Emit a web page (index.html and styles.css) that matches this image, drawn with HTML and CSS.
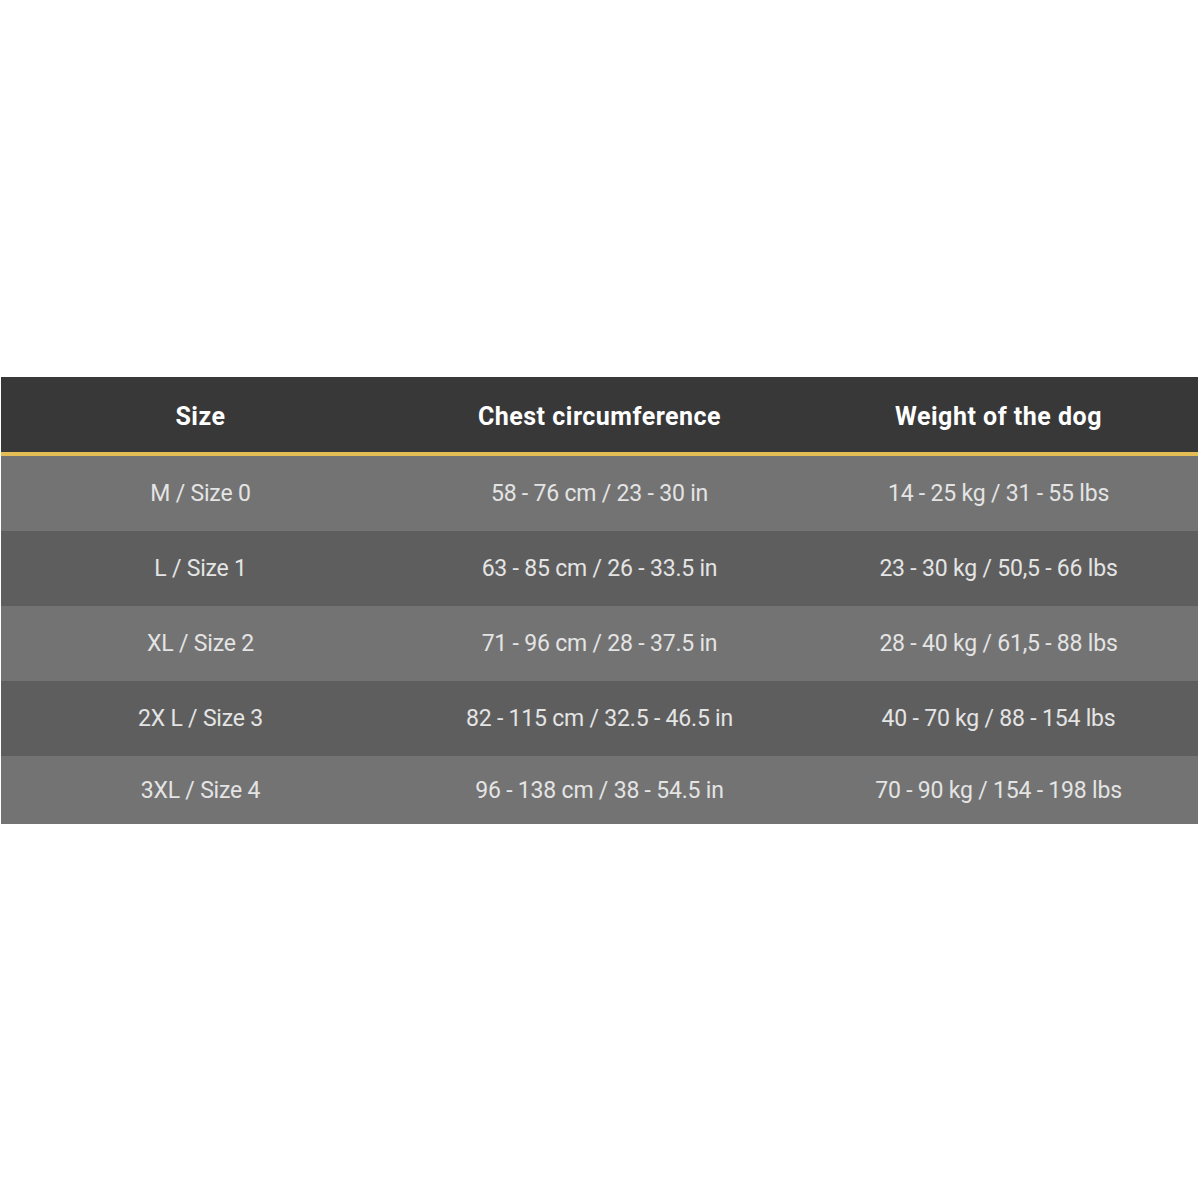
FILE: index.html
```html
<!DOCTYPE html>
<html>
<head>
<meta charset="utf-8">
<link rel="stylesheet" href="styles.css">
</head>
<body>
<div class="page">
  <div class="chart">
    <div class="row head">
      <div class="cell">Size</div>
      <div class="cell">Chest circumference</div>
      <div class="cell">Weight of the dog</div>
    </div>
    <div class="row light">
      <div class="cell">M / Size 0</div>
      <div class="cell">58 - 76 cm / 23 - 30 in</div>
      <div class="cell">14 - 25 kg / 31 - 55 lbs</div>
    </div>
    <div class="row dark">
      <div class="cell">L / Size 1</div>
      <div class="cell">63 - 85 cm / 26 - 33.5 in</div>
      <div class="cell">23 - 30 kg / 50,5 - 66 lbs</div>
    </div>
    <div class="row light">
      <div class="cell">XL / Size 2</div>
      <div class="cell">71 - 96 cm / 28 - 37.5 in</div>
      <div class="cell">28 - 40 kg / 61,5 - 88 lbs</div>
    </div>
    <div class="row dark">
      <div class="cell">2X L / Size 3</div>
      <div class="cell">82 - 115 cm / 32.5 - 46.5 in</div>
      <div class="cell">40 - 70 kg / 88 - 154 lbs</div>
    </div>
    <div class="row light last">
      <div class="cell">3XL / Size 4</div>
      <div class="cell">96 - 138 cm / 38 - 54.5 in</div>
      <div class="cell">70 - 90 kg / 154 - 198 lbs</div>
    </div>
  </div>
</div>
</body>
</html>
```
FILE: styles.css
```css
html, body {
  margin: 0;
  padding: 0;
  background: #ffffff;
}
.page {
  width: 1200px;
  height: 1200px;
  padding-top: 377px;
  padding-left: 1px;
  box-sizing: border-box;
}
.chart {
  width: 1197px;
  display: flex;
  flex-direction: column;
  font-family: Roboto, "Liberation Sans", sans-serif;
}
.row {
  display: grid;
  grid-template-columns: 399px 399px 399px;
  height: 75px;
  align-items: center;
}
.cell {
  text-align: center;
}
.head {
  background: #383838;
  height: 75px;
  border-bottom: 4px solid #e5bd55;
  color: #ffffff;
  font-weight: 700;
  font-size: 25px;
  letter-spacing: 0.5px;
  padding-top: 3px;
  box-sizing: content-box;
  height: 72px;
}
.light, .dark {
  color: #e4e4e4;
  font-size: 23px;
  letter-spacing: -0.2px;
}
.light {
  background: #737373;
}
.dark {
  background: #5e5e5e;
}
.last {
  height: 68px;
}
```
